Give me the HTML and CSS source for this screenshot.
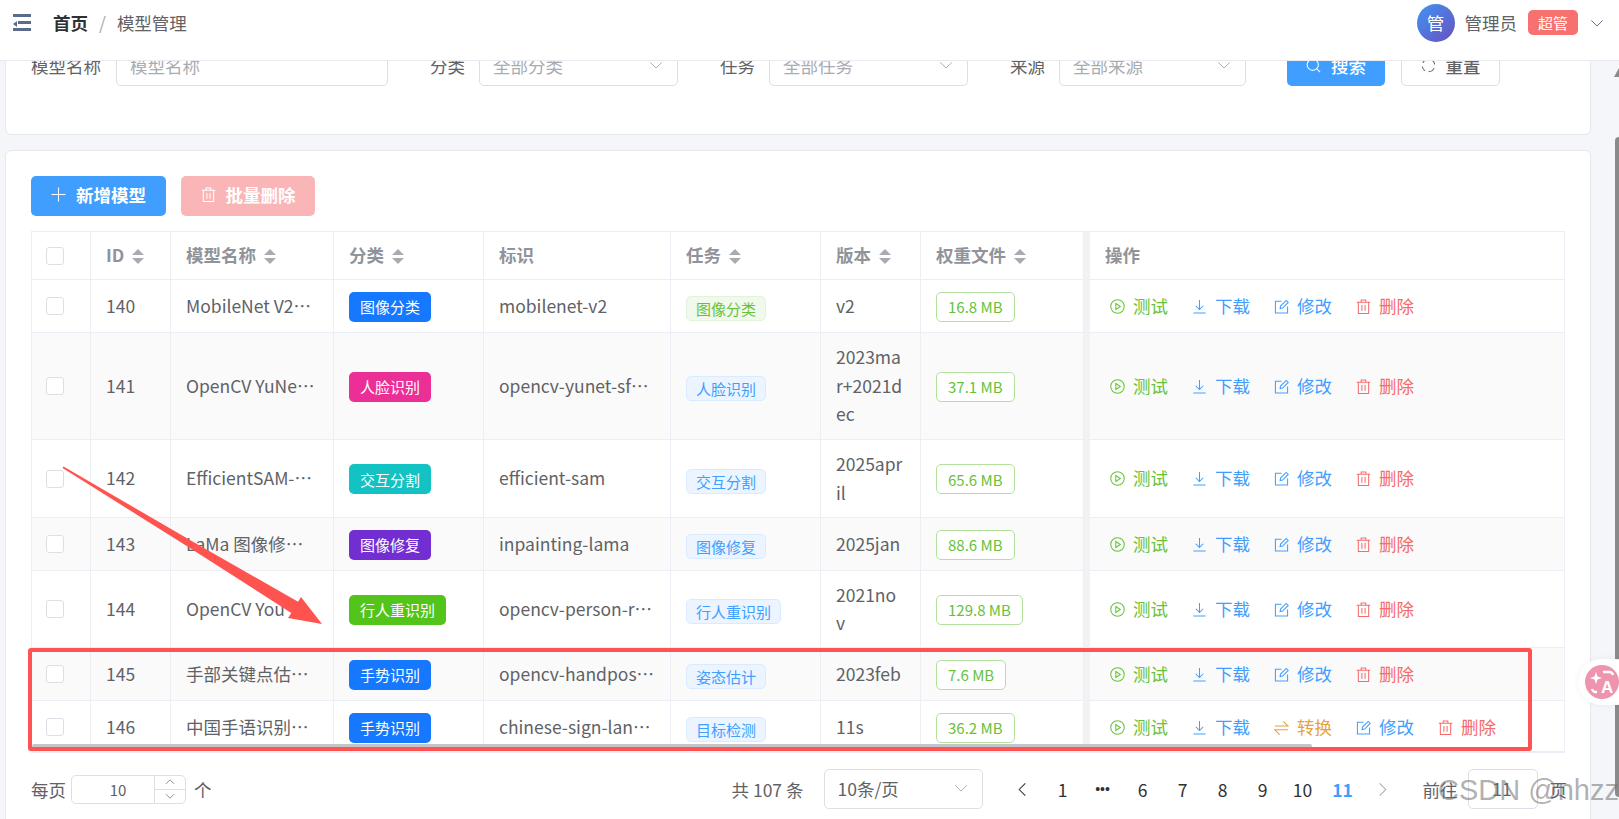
FILE: index.html
```html
<!DOCTYPE html>
<html lang="zh-CN">
<head>
    <meta charset="UTF-8">
    <title>模型管理</title>
    <link rel="stylesheet" href="styles.css">
</head>
<body>
    <svg class="icon-defs" width="0" height="0">
        <symbol id="i-play" viewBox="0 0 16 16"><circle cx="8" cy="8" r="7.2"/><path d="M6.2 4.8v6.4L11 8z"/></symbol>
        <symbol id="i-down" viewBox="0 0 16 16"><path d="M8 1v10M4 7.2l4 4 4-4M1.5 15h13"/></symbol>
        <symbol id="i-edit" viewBox="0 0 16 16"><path d="M14.5 8v7h-13V2.5H8"/><path d="M6.5 10.2l.5-2.7 6-6 2.2 2.2-6 6z"/></symbol>
        <symbol id="i-trash" viewBox="0 0 16 16"><path d="M.8 3.5h14.4M5.5 3.5V1h5v2.5M2.5 3.5v12h11v-12M6.3 6.5v6M9.7 6.5v6"/></symbol>
        <symbol id="i-switch" viewBox="0 0 16 16"><path d="M1 6.5h14L10 1.5M15 10.5H1l5 5"/></symbol>
        <symbol id="i-plus" viewBox="0 0 16 16"><path d="M8 .5v15M.5 8h15"/></symbol>
        <symbol id="i-search" viewBox="0 0 16 16"><circle cx="7.2" cy="7.2" r="6"/><path d="M11.5 11.5l3.5 3.5"/></symbol>
        <symbol id="i-refresh" viewBox="0 0 16 16"><path d="M2 5.2A6.6 6.6 0 0 1 8 1.4M14 10.8a6.6 6.6 0 0 1-6 3.8M1.4 9a6.6 6.6 0 0 0 3 4.8M14.6 7a6.6 6.6 0 0 0-3-4.8"/></symbol>
        <symbol id="i-chevron" viewBox="0 0 16 16"><path d="M1.5 5l6.5 6.5L14.5 5"/></symbol>
        <symbol id="i-left" viewBox="0 0 16 16"><path d="M11 1.5L4.5 8l6.5 6.5"/></symbol>
        <symbol id="i-right" viewBox="0 0 16 16"><path d="M5 1.5L11.5 8 5 14.5"/></symbol>
    </svg>

    <header class="topbar">
        <div class="menu-toggle">
            <span class="menu-line"></span>
            <span class="menu-line menu-line-short"></span>
            <span class="menu-line"></span>
        </div>
        <nav class="breadcrumb">
            <strong>首页</strong>
            <span class="breadcrumb-sep">/</span>
            <span>模型管理</span>
        </nav>
        <div class="user">
            <span class="avatar">管</span>
            <span class="user-name">管理员</span>
            <span class="role-tag">超管</span>
            <svg class="icon user-caret"><use href="#i-chevron"/></svg>
        </div>
    </header>

    <main class="content">
        <div class="content-inner">
            <section class="card search-card">
                <form class="search-form">
                    <label class="field-label label-name">模型名称</label>
                    <div class="field field-name placeholder">模型名称</div>
                    <label class="field-label">分类</label>
                    <div class="field field-select placeholder">全部分类<svg class="icon"><use href="#i-chevron"/></svg></div>
                    <label class="field-label">任务</label>
                    <div class="field field-select placeholder">全部任务<svg class="icon"><use href="#i-chevron"/></svg></div>
                    <label class="field-label">来源</label>
                    <div class="field field-select field-source placeholder">全部来源<svg class="icon"><use href="#i-chevron"/></svg></div>
                    <button type="button" class="btn btn-primary btn-search"><svg class="icon"><use href="#i-search"/></svg>搜索</button>
                    <button type="button" class="btn btn-plain"><svg class="icon"><use href="#i-refresh"/></svg>重置</button>
                </form>
            </section>

            <section class="card table-card">
                <div class="toolbar">
                    <button type="button" class="btn btn-primary btn-strong"><svg class="icon"><use href="#i-plus"/></svg>新增模型</button>
                    <button type="button" class="btn btn-danger-off btn-strong"><svg class="icon"><use href="#i-trash"/></svg>批量删除</button>
                </div>

                <div class="table-wrap">
                    <table class="model-table">
                        <colgroup>
                            <col class="col-check"><col class="col-id"><col class="col-name"><col class="col-cat">
                            <col class="col-key"><col class="col-task"><col class="col-ver"><col class="col-size"><col>
                        </colgroup>
                        <thead>
                            <tr>
                                <th><span class="checkbox"></span></th>
                                <th>ID<span class="sort"></span></th>
                                <th>模型名称<span class="sort"></span></th>
                                <th>分类<span class="sort"></span></th>
                                <th>标识</th>
                                <th>任务<span class="sort"></span></th>
                                <th>版本<span class="sort"></span></th>
                                <th>权重文件<span class="sort"></span></th>
                                <th class="actions-cell">操作</th>
                            </tr>
                        </thead>
                        <tbody>
                            <tr class="row-sm">
                                <td><span class="checkbox"></span></td>
                                <td>140</td>
                                <td>MobileNet V2…</td>
                                <td><span class="cat-tag cat-blue">图像分类</span></td>
                                <td>mobilenet-v2</td>
                                <td><span class="task-tag task-green">图像分类</span></td>
                                <td class="ver-cell">v2</td>
                                <td><span class="size-tag">16.8 MB</span></td>
                                <td class="actions-cell">
                                    <div class="actions">
                                        <a class="link link-green"><svg class="icon"><use href="#i-play"/></svg>测试</a>
                                        <a class="link link-blue"><svg class="icon"><use href="#i-down"/></svg>下载</a>
                                        <a class="link link-blue"><svg class="icon"><use href="#i-edit"/></svg>修改</a>
                                        <a class="link link-red"><svg class="icon"><use href="#i-trash"/></svg>删除</a>
                                    </div>
                                </td>
                            </tr>
                            <tr class="row-lg stripe">
                                <td><span class="checkbox"></span></td>
                                <td>141</td>
                                <td>OpenCV YuNe…</td>
                                <td><span class="cat-tag cat-pink">人脸识别</span></td>
                                <td>opencv-yunet-sf…</td>
                                <td><span class="task-tag">人脸识别</span></td>
                                <td class="ver-cell">2023mar+2021dec</td>
                                <td><span class="size-tag">37.1 MB</span></td>
                                <td class="actions-cell">
                                    <div class="actions">
                                        <a class="link link-green"><svg class="icon"><use href="#i-play"/></svg>测试</a>
                                        <a class="link link-blue"><svg class="icon"><use href="#i-down"/></svg>下载</a>
                                        <a class="link link-blue"><svg class="icon"><use href="#i-edit"/></svg>修改</a>
                                        <a class="link link-red"><svg class="icon"><use href="#i-trash"/></svg>删除</a>
                                    </div>
                                </td>
                            </tr>
                            <tr class="row-md-tall">
                                <td><span class="checkbox"></span></td>
                                <td>142</td>
                                <td>EfficientSAM-…</td>
                                <td><span class="cat-tag cat-cyan">交互分割</span></td>
                                <td>efficient-sam</td>
                                <td><span class="task-tag">交互分割</span></td>
                                <td class="ver-cell">2025april</td>
                                <td><span class="size-tag">65.6 MB</span></td>
                                <td class="actions-cell">
                                    <div class="actions">
                                        <a class="link link-green"><svg class="icon"><use href="#i-play"/></svg>测试</a>
                                        <a class="link link-blue"><svg class="icon"><use href="#i-down"/></svg>下载</a>
                                        <a class="link link-blue"><svg class="icon"><use href="#i-edit"/></svg>修改</a>
                                        <a class="link link-red"><svg class="icon"><use href="#i-trash"/></svg>删除</a>
                                    </div>
                                </td>
                            </tr>
                            <tr class="row-sm stripe">
                                <td><span class="checkbox"></span></td>
                                <td>143</td>
                                <td>LaMa 图像修…</td>
                                <td><span class="cat-tag cat-purple">图像修复</span></td>
                                <td>inpainting-lama</td>
                                <td><span class="task-tag">图像修复</span></td>
                                <td class="ver-cell">2025jan</td>
                                <td><span class="size-tag">88.6 MB</span></td>
                                <td class="actions-cell">
                                    <div class="actions">
                                        <a class="link link-green"><svg class="icon"><use href="#i-play"/></svg>测试</a>
                                        <a class="link link-blue"><svg class="icon"><use href="#i-down"/></svg>下载</a>
                                        <a class="link link-blue"><svg class="icon"><use href="#i-edit"/></svg>修改</a>
                                        <a class="link link-red"><svg class="icon"><use href="#i-trash"/></svg>删除</a>
                                    </div>
                                </td>
                            </tr>
                            <tr class="row-md">
                                <td><span class="checkbox"></span></td>
                                <td>144</td>
                                <td>OpenCV You…</td>
                                <td><span class="cat-tag cat-green">行人重识别</span></td>
                                <td>opencv-person-r…</td>
                                <td><span class="task-tag">行人重识别</span></td>
                                <td class="ver-cell">2021nov</td>
                                <td><span class="size-tag">129.8 MB</span></td>
                                <td class="actions-cell">
                                    <div class="actions">
                                        <a class="link link-green"><svg class="icon"><use href="#i-play"/></svg>测试</a>
                                        <a class="link link-blue"><svg class="icon"><use href="#i-down"/></svg>下载</a>
                                        <a class="link link-blue"><svg class="icon"><use href="#i-edit"/></svg>修改</a>
                                        <a class="link link-red"><svg class="icon"><use href="#i-trash"/></svg>删除</a>
                                    </div>
                                </td>
                            </tr>
                            <tr class="row-sm stripe">
                                <td><span class="checkbox"></span></td>
                                <td>145</td>
                                <td>手部关键点估…</td>
                                <td><span class="cat-tag cat-blue">手势识别</span></td>
                                <td>opencv-handpos…</td>
                                <td><span class="task-tag">姿态估计</span></td>
                                <td class="ver-cell">2023feb</td>
                                <td><span class="size-tag">7.6 MB</span></td>
                                <td class="actions-cell">
                                    <div class="actions">
                                        <a class="link link-green"><svg class="icon"><use href="#i-play"/></svg>测试</a>
                                        <a class="link link-blue"><svg class="icon"><use href="#i-down"/></svg>下载</a>
                                        <a class="link link-blue"><svg class="icon"><use href="#i-edit"/></svg>修改</a>
                                        <a class="link link-red"><svg class="icon"><use href="#i-trash"/></svg>删除</a>
                                    </div>
                                </td>
                            </tr>
                            <tr class="row-last">
                                <td><span class="checkbox"></span></td>
                                <td>146</td>
                                <td>中国手语识别…</td>
                                <td><span class="cat-tag cat-blue">手势识别</span></td>
                                <td>chinese-sign-lan…</td>
                                <td><span class="task-tag">目标检测</span></td>
                                <td class="ver-cell">11s</td>
                                <td><span class="size-tag">36.2 MB</span></td>
                                <td class="actions-cell">
                                    <div class="actions">
                                        <a class="link link-green"><svg class="icon"><use href="#i-play"/></svg>测试</a>
                                        <a class="link link-blue"><svg class="icon"><use href="#i-down"/></svg>下载</a>
                                        <a class="link link-orange"><svg class="icon"><use href="#i-switch"/></svg>转换</a>
                                        <a class="link link-blue"><svg class="icon"><use href="#i-edit"/></svg>修改</a>
                                        <a class="link link-red"><svg class="icon"><use href="#i-trash"/></svg>删除</a>
                                    </div>
                                </td>
                            </tr>
                        </tbody>
                    </table>
                    <div class="table-scrollbar"></div>
                </div>

                <div class="pagination">
                    <div class="page-size">
                        <span>每页</span>
                        <div class="number-input">
                            <span class="number-value">10</span>
                            <div class="number-spin">
                                <span><svg class="icon"><use href="#i-chevron"/></svg></span>
                                <span><svg class="icon"><use href="#i-chevron"/></svg></span>
                            </div>
                        </div>
                        <span>个</span>
                    </div>
                    <div class="pager">
                        <span class="pager-total">共 107 条</span>
                        <div class="field pager-select">10条/页<svg class="icon"><use href="#i-chevron"/></svg></div>
                        <ul class="pager-list">
                            <li><svg class="icon"><use href="#i-left"/></svg></li>
                            <li>1</li>
                            <li class="pager-more">•••</li>
                            <li>6</li>
                            <li>7</li>
                            <li>8</li>
                            <li>9</li>
                            <li>10</li>
                            <li class="pager-current">11</li>
                            <li class="pager-off"><svg class="icon"><use href="#i-right"/></svg></li>
                        </ul>
                        <span class="pager-goto">前往</span>
                        <div class="field pager-input">11</div>
                        <span class="pager-unit">页</span>
                    </div>
                </div>
            </section>
        </div>
    </main>

    <!-- things sitting on top of the page: annotations, scrollbar, translate widget, watermark -->
    <div class="page-scrollbar"></div>
    <div class="page-scroll-arrow"></div>
    <div class="mark-box"></div>
    <svg class="mark-arrow" width="340" height="180" viewBox="0 0 340 180">
        <polygon points="3.5,6.5 134.3,82.5 238.1,141.8 241,137 262,164 228,158 231.3,153 130.7,88.5 2.5,8"/>
    </svg>
    <div class="translate-widget">
        <svg width="34" height="34" viewBox="0 0 34 34">
            <circle cx="17" cy="17" r="17" fill="#ee94ae"/>
            <path d="M11 7l1.6 4.4L17 13l-4.4 1.6L11 19l-1.6-4.4L5 13l4.4-1.6z" fill="#fff"/>
            <path d="M18 7h6a4 4 0 0 1 4 3M12 27h-2a4 4 0 0 1-3-3" fill="none" stroke="#fff" stroke-width="2.4"/>
            <text x="16" y="28" class="translate-a">A</text>
        </svg>
    </div>
    <div class="watermark">CSDN @nhzz</div>
</body>
</html>
```

FILE: styles.css
```css
* {
    box-sizing: border-box;
}

html, body {
    margin: 0;
    height: 100%;
    overflow: hidden;
}

body {
    position: relative;
    font-family: "Noto Sans CJK SC", "Noto Sans", sans-serif;
    font-size: 17.5px;
    color: #606266;
    background-color: #f4f6fa;
}

.icon-defs {
    position: absolute;
}

.icon {
    width: 15px;
    height: 15px;
    flex-shrink: 0;
    fill: none;
    stroke: currentColor;
    stroke-width: 1.1;
}

/* top bar */
.topbar {
    position: relative;
    z-index: 2;
    display: flex;
    align-items: center;
    height: 61px;
    padding: 0 15px 16px 13px;
    background-color: #ffffff;
    border-bottom: 1px solid #e9ebf0;
}

.menu-toggle {
    position: relative;
    display: flex;
    flex-direction: column;
    align-items: flex-end;
    gap: 4px;
    width: 18px;
    margin-top: 1px;
}

.menu-toggle::before {
    content: "";
    position: absolute;
    left: 0;
    top: 7px;
    border-top: 3px solid transparent;
    border-bottom: 3px solid transparent;
    border-right: 4px solid #5a6b8c;
}

.menu-line {
    width: 100%;
    height: 3px;
    background-color: #5a6b8c;
}

.menu-line-short {
    width: 72%;
}

.breadcrumb {
    display: flex;
    align-items: center;
    margin-left: 22px;
}

.breadcrumb strong {
    color: #303133;
}

.breadcrumb-sep {
    margin: 0 11px;
    color: #a8abb2;
}

.user {
    display: flex;
    align-items: center;
    margin-left: auto;
    margin-top: 1px;
}

.avatar {
    display: flex;
    align-items: center;
    justify-content: center;
    width: 38px;
    height: 38px;
    border-radius: 50%;
    color: #ffffff;
    background: linear-gradient(135deg, #3f95f5, #6a50bd);
}

.user-name {
    margin-left: 10px;
}

.role-tag {
    display: flex;
    align-items: center;
    justify-content: center;
    width: 50px;
    height: 25px;
    margin-left: 11px;
    border-radius: 5px;
    font-size: 15px;
    color: #ffffff;
    background-color: #f87171;
}

.user-caret {
    width: 14px;
    height: 14px;
    margin-left: 12px;
    color: #5a6b8c;
}

/* content */
.content {
    height: 758px;
    overflow: hidden;
}

.content-inner {
    margin-top: -31px;
    padding-left: 5px;
    width: 1591px;
}

.card {
    background-color: #ffffff;
    border: 1px solid #e6e8ee;
    border-radius: 6px;
}

.search-card {
    height: 105px;
    padding: 15px 25px 0;
    margin-bottom: 15px;
}

.search-form {
    display: flex;
    align-items: center;
}

.field-label {
    margin-left: 42px;
    margin-right: 14px;
    margin-bottom: 2px;
    white-space: nowrap;
}

.label-name {
    margin-left: 0;
    margin-right: 15px;
}

.field {
    display: flex;
    align-items: center;
    justify-content: space-between;
    height: 40px;
    padding: 0 14px 2px 13px;
    background-color: #ffffff;
    border: 1px solid #dcdfe6;
    border-radius: 5px;
}

.field .icon {
    width: 14px;
    height: 14px;
    color: #a8abb2;
}

.placeholder {
    color: #a8abb2;
}

.field-name {
    width: 272px;
}

.field-select {
    width: 199px;
}

.field-source {
    width: 187px;
}

.btn {
    display: inline-flex;
    align-items: center;
    justify-content: center;
    gap: 10px;
    height: 40px;
    padding: 0 0 2px;
    border: 1px solid transparent;
    border-radius: 5px;
    font-family: inherit;
    font-size: 17.5px;
    font-weight: 500;
}

.btn-strong {
    font-weight: 700;
    width: 134px;
    padding-bottom: 4px;
}

.btn-primary {
    color: #ffffff;
    background-color: #409eff;
}

.btn-danger-off {
    color: #ffffff;
    background-color: #fab6b6;
}

.btn-plain {
    width: 99px;
    margin-left: 16px;
    color: #606266;
    background-color: #ffffff;
    border-color: #dcdfe6;
}

.btn-search {
    width: 98px;
    margin-left: 41px;
}

.table-card {
    height: 720px;
    padding: 25px 25px 0;
}

.toolbar {
    display: flex;
    gap: 15px;
    margin-bottom: 15px;
}

.toolbar .btn-primary {
    width: 135px;
}

/* table */
.table-wrap {
    position: relative;
    width: 1534px;
    border-top: 1px solid #ebeef5;
    border-left: 1px solid #ebeef5;
    border-right: 1px solid #ebeef5;
    border-bottom: 2px solid #ebeef5;
}

.model-table {
    width: 100%;
    table-layout: fixed;
    border-collapse: separate;
    border-spacing: 0;
    line-height: 28.5px;
}

.col-check { width: 59px; }
.col-id { width: 80px; }
.col-name { width: 163px; }
.col-cat { width: 150px; }
.col-key { width: 187px; }
.col-task { width: 150px; }
.col-ver { width: 100px; }
.col-size { width: 163px; }

.model-table th,
.model-table td {
    padding: 0 15px;
    text-align: left;
    vertical-align: middle;
    word-break: break-all;
    border-right: 1px solid #ebeef5;
    border-bottom: 1px solid #ebeef5;
}

.model-table th:first-child,
.model-table td:first-child {
    padding-left: 14px;
}

.model-table td.ver-cell {
    padding-right: 17px;
}

.model-table th {
    height: 48px;
    font-weight: 700;
    color: #909399;
}

.model-table th.actions-cell,
.model-table td.actions-cell {
    padding-left: 15px;
    border-right: 0;
    border-left: 6px solid #f1f2f4;
}

.model-table tbody tr:last-child td {
    padding-top: 2px;
    border-bottom: 0;
}

.row-sm td { height: 53px; }
.row-md td { height: 77px; }
.row-md-tall td { height: 78px; }
.row-lg td { height: 107px; }
.row-last td { height: 50px; }

.stripe td {
    background-color: #fafafa;
}

.checkbox {
    display: block;
    width: 18px;
    height: 18px;
    background-color: #ffffff;
    border: 1px solid #dcdfe6;
    border-radius: 3px;
}

.sort {
    display: inline-block;
    position: relative;
    width: 12px;
    height: 15px;
    margin-left: 8px;
    vertical-align: -2px;
}

.sort::before,
.sort::after {
    content: "";
    position: absolute;
    left: 0;
    border-left: 6px solid transparent;
    border-right: 6px solid transparent;
}

.sort::before {
    top: 0;
    border-bottom: 6px solid #a8abb2;
}

.sort::after {
    bottom: 0;
    border-top: 6px solid #a8abb2;
}

/* tags */
.cat-tag,
.size-tag,
.task-tag {
    display: inline-flex;
    align-items: center;
    font-size: 15px;
    line-height: 1;
    white-space: nowrap;
    vertical-align: middle;
    border-radius: 5px;
}

.cat-tag {
    height: 30px;
    padding: 0 11px;
    color: #ffffff;
}

.cat-blue { background-color: #1677ff; }
.cat-pink { background-color: #eb2f96; }
.cat-cyan { background-color: #13c2c2; }
.cat-purple { background-color: #722ed1; }
.cat-green { background-color: #52c41a; }

.task-tag {
    height: 25px;
    margin-top: 3px;
    padding: 0 9px;
    color: #409eff;
    background-color: #ecf5ff;
    border: 1px solid #d9ecff;
}

.task-green {
    color: #67c23a;
    background-color: #f0f9eb;
    border-color: #e1f3d8;
}

.size-tag {
    height: 30px;
    padding: 0 11px;
    color: #67c23a;
    background-color: #ffffff;
    border: 1px solid #b3e19d;
}

/* row actions */
.actions {
    display: flex;
    gap: 24px;
    padding-left: 5px;
}

.link {
    display: inline-flex;
    align-items: center;
    gap: 8px;
    width: 58px;
    white-space: nowrap;
}

.link-green { color: #67c23a; }
.link-blue { color: #409eff; }
.link-orange { color: #e6a23c; }
.link-red { color: #f56c6c; }

.table-scrollbar {
    position: absolute;
    left: 0;
    bottom: 3px;
    width: 1280px;
    height: 4px;
    border-radius: 2px;
    background-color: #c4c5c8;
}

/* pagination */
.pagination {
    display: flex;
    align-items: center;
    justify-content: space-between;
    width: 1536px;
    margin-top: 16px;
}

.page-size {
    display: flex;
    align-items: center;
}

.number-input {
    display: flex;
    flex-shrink: 0;
    width: 115px;
    height: 29px;
    margin: 0 8px 0 5px;
    border: 1px solid #dcdfe6;
    border-radius: 5px;
}

.number-value {
    flex: 1;
    padding-left: 10px;
    font-size: 15px;
    line-height: 27px;
    text-align: center;
}

.number-spin {
    display: flex;
    flex-direction: column;
    width: 31px;
    border-left: 1px solid #dcdfe6;
}

.number-spin span {
    display: flex;
    flex: 1;
    align-items: center;
    justify-content: center;
}

.number-spin span:first-child {
    border-bottom: 1px solid #dcdfe6;
}

.number-spin span:first-child .icon {
    transform: rotate(180deg);
}

.number-spin .icon {
    width: 10px;
    height: 10px;
}

.pager {
    display: flex;
    align-items: center;
}

.pager-select {
    width: 159px;
    margin: 0 20px;
}

.pager-list {
    display: flex;
    margin: 0;
    padding: 0;
    list-style: none;
    color: #303133;
}

.pager-list li {
    display: flex;
    align-items: center;
    justify-content: center;
    width: 40px;
    height: 40px;
}

.pager-list .pager-more {
    font-family: "Liberation Sans", sans-serif;
    font-size: 14px;
}

.pager-list .pager-current {
    font-weight: 700;
    color: #409eff;
}

.pager-list .pager-off {
    color: #a8abb2;
}

.pager-goto {
    margin-left: 20px;
}

.pager-input {
    justify-content: center;
    width: 70px;
    margin: 0 12px 0 10px;
}

/* overlays */
.page-scrollbar {
    position: absolute;
    top: 137px;
    right: 0;
    width: 4px;
    height: 660px;
    border-radius: 4px 0 0 4px;
    background-color: #8a8a8a;
}

.page-scroll-arrow {
    position: absolute;
    top: 68px;
    right: 0;
    border-left: 5px solid transparent;
    border-right: 0;
    border-bottom: 9px solid #8a8a8a;
}

.mark-box {
    position: absolute;
    left: 28px;
    top: 648px;
    width: 1504px;
    height: 103px;
    border: 4px solid #ff5252;
    border-radius: 3px;
}

.mark-arrow {
    position: absolute;
    left: 60px;
    top: 460px;
    fill: #ff5350;
}

.translate-widget {
    position: absolute;
    left: 1578px;
    top: 659px;
    display: flex;
    align-items: center;
    width: 60px;
    height: 46px;
    padding-left: 7px;
    border-radius: 23px;
    background-color: #ffffff;
    box-shadow: 0 0 6px rgba(0, 0, 0, 0.06);
}

.translate-a {
    font-family: "Liberation Sans", sans-serif;
    font-size: 17px;
    font-weight: 700;
    fill: #ffffff;
}

.watermark {
    position: absolute;
    left: 1438px;
    top: 773px;
    font-family: "Liberation Sans", sans-serif;
    font-size: 29px;
    line-height: 34px;
    white-space: nowrap;
    color: rgba(110, 110, 110, 0.55);
}
```
